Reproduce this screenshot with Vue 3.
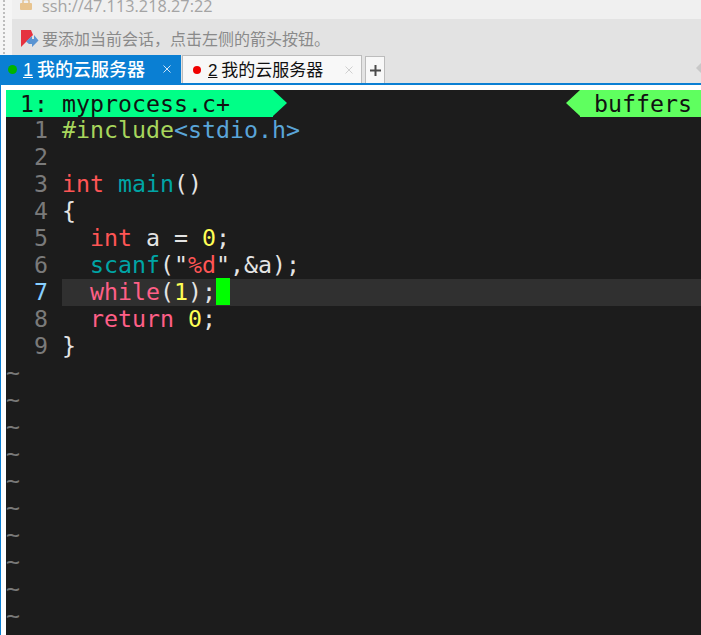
<script setup>
const tabs = [
  { n: '1', label: '我的云服务器', dot: '#00b400', active: true },
  { n: '2', label: '我的云服务器', dot: '#f00000', active: false },
]
const R = 'kw'
const code = [
  [['inc', '#include'], ['str', '<stdio.h>']],
  [],
  [['red', 'int'], ['', ' '], ['fn', 'main'], ['par', '()']],
  [['par', '{']],
  [['', '  '], ['red', 'int'], ['par', ' a = '], ['yel', '0'], ['par', ';']],
  [['', '  '], ['fn', 'scanf'], ['par', '("'], ['red', '%d'], ['par', '",&a);']],
  [['', '  '], [R, 'while'], ['par', '('], ['yel', '1'], ['par', ');'], ['cur', ' ']],
  [['', '  '], [R, 'return'], ['par', ' '], ['yel', '0'], ['par', ';']],
  [['par', '}']],
]
const tildes = 10
</script>

<template>
  <div class="app">
    <div class="chrome">
      <div class="grip"></div>
      <div class="bars">
        <div class="address">
          <svg class="lock" width="12" height="10" viewBox="0 0 12 10">
            <path d="M3 3V1C3 -1 9 -1 9 1V3" fill="none" stroke="#e3c598" stroke-width="1.600" />
            <rect x="0" y="3" width="12" height="7" rx="1" fill="#e8c48f" />
          </svg>
          <span>ssh://47.113.218.27:22</span>
        </div>
        <div class="hint">
          <svg class="flag" width="18" height="18" viewBox="0 0 18 18">
            <path d="M0 0H10L12 5L6 11L4 13L0 17Z" fill="#e5323f" />
            <path d="M5 11.500L11 6V9H13V5L17.500 10.500L11 17V14H8Z" fill="#5a94d2" />
          </svg>
          <span class="hint-text">要添加当前会话，点击左侧的箭头按钮。</span>
        </div>
      </div>
    </div>
    <div class="tabbar">
      <div v-for="t in tabs" :key="t.n" class="tab" :class="{ on: t.active }">
        <i class="dot" :style="{ background: t.dot }"></i>
        <span class="title"><u>{{ t.n }}</u> {{ t.label }}</span>
        <svg class="x" width="8" height="8" viewBox="0 0 8 8">
          <path d="M0.500 0.500l7 7M7.500 0.500l-7 7" fill="none" stroke="currentColor" stroke-width="1" />
        </svg>
      </div>
      <div class="plus">
        <svg width="11" height="11" viewBox="0 0 11 11">
          <path d="M5.500 0v11M0 5.500h11" fill="none" stroke="#4a4a4a" stroke-width="2" />
        </svg>
      </div>
      <div class="arrow"></div>
    </div>
    <div class="pane">
      <div class="term">
        <div class="status">
          <div class="left">1: myprocess.c+</div>
          <div class="right">buffers</div>
        </div>
        <div v-for="(line, i) in code" :key="i" class="row code" :class="{ active: i === 6 }">
          <span class="num">{{ i + 1 }}</span>
          <span class="line"><span v-for="(s, j) in line" :key="j" :class="s[0]">{{ s[1] }}</span></span>
        </div>
        <div v-for="k in tildes" :key="'t' + k" class="row tilde">~</div>
      </div>
    </div>
  </div>
</template>

<style>
html, body { margin: 0; padding: 0; background: #fff; overflow: hidden; }
</style>

<style scoped>
.app { width: 701px; height: 635px; overflow: hidden; display: flex; flex-direction: column; background: #fff; }
.chrome { display: flex; height: 55px; flex: none; background: #f5f5f5; }
.grip { width: 12px; flex: none; background: radial-gradient(circle at 1px 1px, #bdbdbd 1px, transparent 1.200px) 3px 0 / 3px 4px; background-clip: content-box; padding: 0 6px 0 3px; box-sizing: border-box; }
.bars { flex: 1; display: flex; flex-direction: column; }
.address { height: 19px; flex: none; background: #f0f0f0; display: flex; align-items: flex-end; padding-left: 8px; gap: 10px; overflow: hidden; color: #a4a4a4; font: 16.300px/24px "Open Sans", sans-serif; }
.address span { margin-bottom: 1px; }
.lock { flex: none; margin-bottom: 9px; }
.hint { height: 36px; flex: none; background: #e3e3e3; display: flex; align-items: center; padding-left: 9px; gap: 3px; color: #8a8a8a; font: 16px/24px "Noto Sans CJK SC", sans-serif; }
.hint-text { margin-top: 2px; }
.flag { flex: none; margin-top: 3px; }
.tabbar { height: 28px; flex: none; background: #e3e3e3; display: flex; align-items: stretch; gap: 1px; position: relative; }
.tab { width: 180px; display: flex; align-items: center; box-sizing: border-box; border: 1.500px solid #bcbcbc; border-bottom: 0; background: #f8f8f8; color: #111; font: 17px/26px "Noto Sans CJK SC", sans-serif; padding-left: 10px; }
.tab.on { width: 181px; border: 0; background: #0a7fd3; color: #fff; font-size: 18px; font-weight: 500; padding-left: 8px; }
.tab.on .dot { width: 9px; height: 9px; }
.tab.on .title { margin-left: 6px; }
.dot { width: 8px; height: 8px; border-radius: 50%; flex: none; }
.title { margin-left: 7px; flex: 1; white-space: nowrap; }
.title u { font-family: "Liberation Sans", sans-serif; }
.x { color: #d0d0d0; margin-right: 8px; flex: none; }
.tab.on .x { color: #cfe5f7; margin-right: 10px; }
.plus { width: 20px; margin: 1px 0 0 2px; border: 1.500px solid #bcbcbc; border-bottom: 0; box-sizing: border-box; background: #f8f8f8; display: flex; align-items: center; justify-content: center; }
.arrow { position: absolute; right: 0; top: 8px; border: 5px solid transparent; border-right-color: #c8c8c8; border-left: 0; }
.pane { flex: 1; min-height: 0; border-top: 2px solid #0a7fd3; border-left: 1px solid #0a7fd3; padding: 5px 0 0 5px; }
.term { height: 100%; background: #1c1c1c; font: 23.250px/25px "DejaVu Sans Mono", monospace; overflow: hidden; }
.status { height: 27px; line-height: 27px; display: flex; justify-content: space-between; color: #111; }
.left { position: relative; width: 267px; box-sizing: border-box; padding-left: 14px; background: #00ff87; white-space: pre; }
.left::after { content: ""; position: absolute; left: 100%; top: 0; border-left: 14px solid #00ff87; border-top: 13.500px solid transparent; border-bottom: 13.500px solid transparent; }
.right { position: relative; width: 121px; box-sizing: border-box; padding-left: 14px; background: #5fff5f; }
.right::before { content: ""; position: absolute; right: 100%; top: 0; border-right: 14px solid #5fff5f; border-top: 13.500px solid transparent; border-bottom: 13.500px solid transparent; }
.row { height: 27px; display: flex; white-space: pre; }
.code { line-height: 26px; }
.num { width: 42px; text-align: right; color: #7a7a7a; flex: none; margin-right: 14px; }
.line { flex: 1; }
.active .line { background: #303030; }
.active .num { color: #87cfff; }
.tilde { color: #787878; }
.inc { color: #a7d65c; }
.str { color: #5aa5d8; }
.red { color: #ff5555; }
.fn { color: #00a5a5; }
.par { color: #e4e4e4; }
.yel { color: #ffff55; }
.kw { color: #ff5f87; }
.cur { background: #00ff00; }
</style>
